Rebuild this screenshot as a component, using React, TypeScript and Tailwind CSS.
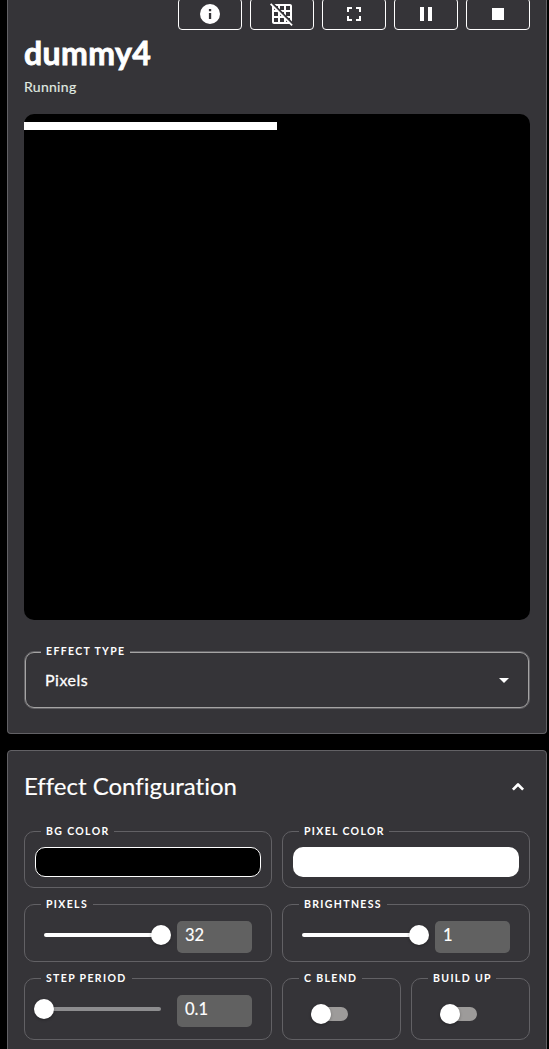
import type { ReactNode } from "react";
import { MdArrowDropDown, MdFullscreen, MdGridOff, MdPause, MdStop } from "react-icons/md";

function InfoIcon() {
  return (
    <svg viewBox="0 0 24 24" className="size-6" fill="currentColor" fillRule="evenodd">
      <path d="M12 2a10 10 0 1 0 0 20 10 10 0 0 0 0-20zM10.9 7h2.3v2.2h-2.3zM10.9 11h2.3v6h-2.3z" />
    </svg>
  );
}

function ChevronUp() {
  return (
    <svg viewBox="0 0 24 24" className="size-6" fill="none" stroke="currentColor" strokeWidth="2.7" strokeLinejoin="round">
      <path d="M6.9 14.6 12 9.5l5.1 5.1" />
    </svg>
  );
}

function ToolButton({ children }: { children: ReactNode }) {
  return (
    <button className="flex h-8 w-16 items-center justify-center rounded border border-white text-2xl text-white">
      {children}
    </button>
  );
}

function Label({ text, width }: { text: string; width: string }) {
  return (
    <div className="absolute -top-[6px] left-4 flex h-3 bg-[#353438] pl-[5px]">
      <span className={`block whitespace-nowrap text-[10.5px] leading-[11px] font-bold tracking-[1.35px] text-white ${width}`}>{text}</span>
    </div>
  );
}

function Field({ label, labelWidth, className, children }: { label: string; labelWidth: string; className: string; children: ReactNode }) {
  return (
    <div className={`relative rounded-[10px] border border-[#626165] ${className}`}>
      <Label text={label} width={labelWidth} />
      {children}
    </div>
  );
}

function Slider({ full }: { full: boolean }) {
  return (
    <div className="relative flex h-5 w-[117px] items-center">
      <div className={`h-1 w-full rounded-full ${full ? "bg-white" : "bg-[#8d8d8f]"}`} />
      <div className={`absolute top-0 size-5 rounded-full bg-white shadow-[0_1px_3px_rgba(0,0,0,0.3)] ${full ? "-right-[10px]" : "-left-[10px]"}`} />
    </div>
  );
}

function NumberBox({ value }: { value: string }) {
  return (
    <div className="ml-4 flex h-8 w-[75px] items-center rounded-[5px] bg-[#616161] pb-[3px] pl-2 text-[16.5px] text-white [-webkit-text-stroke:0.15px_white]">
      {value}
    </div>
  );
}

function Toggle() {
  return (
    <div className="relative ml-[31px] mt-[28px] h-[14px] w-[34px] rounded-full bg-[#9d9b9a]">
      <div className="absolute -left-[3px] -top-[3px] size-5 rounded-full bg-white shadow-[0_1px_3px_rgba(0,0,0,0.3)]" />
    </div>
  );
}

export default function App() {
  return (
    <div className="h-[1049px] w-[549px] overflow-hidden bg-black pl-[7px] font-[Lato,'Noto_Sans',sans-serif] text-white [font-variant-ligatures:none]">
      <section className="flex h-[734px] w-[540px] flex-col rounded-b-[4px] border border-t-0 border-[#626165] bg-[#353438] px-4">
        <div className="-mt-[2px] flex justify-end gap-2">
          <ToolButton><InfoIcon /></ToolButton>
          <ToolButton><MdGridOff /></ToolButton>
          <ToolButton><MdFullscreen /></ToolButton>
          <ToolButton><MdPause /></ToolButton>
          <ToolButton><MdStop /></ToolButton>
        </div>
        <h1 className="mt-[3px] h-10 text-[32px] leading-10 font-bold tracking-[0.4px] [-webkit-text-stroke:0.8px_white]">dummy4</h1>
        <p className="mt-1 h-5 text-[14px] leading-5 tracking-[0.3px] text-[#e0ebe2] [-webkit-text-stroke:0.15px_#e0ebe2]">Running</p>
        <div className="mt-[17px] h-[506px] w-[506px] rounded-[10px] bg-black pt-2">
          <div className="h-2 w-[253px] bg-white" />
        </div>
        <div className="relative mt-[31px] h-[58px] rounded-[10px] border border-[#626165]">
          <div className="flex h-full items-center justify-between rounded-[9px] border border-[#a5a4a4] pl-[19px] pr-[12px]">
            <span className="text-[16px] tracking-[0.5px] [-webkit-text-stroke:0.3px_white]">Pixels</span>
            <MdArrowDropDown className="text-2xl" />
          </div>
          <Label text="EFFECT TYPE" width="w-[84px]" />
        </div>
      </section>

      <section className="mt-4 h-[320px] w-[540px] rounded-t-[4px] border border-[#626165] bg-[#353438] px-4">
        <header className="flex h-[72px] items-center justify-between">
          <h2 className="pb-[2px] text-[24px] [-webkit-text-stroke:0.15px_white]">Effect Configuration</h2>
          <ChevronUp />
        </header>
        <div className="mt-2 grid grid-cols-[248px_248px] gap-x-[10px]">
          <Field label="BG COLOR" labelWidth="w-[68px]" className="h-[57px] px-[10px] pt-[15px]">
            <div className="h-[30px] rounded-[10px] border border-white bg-black" />
          </Field>
          <Field label="PIXEL COLOR" labelWidth="w-[85px]" className="h-[57px] px-[10px] pt-[15px]">
            <div className="h-[30px] rounded-[10px] bg-white" />
          </Field>
          <Field label="PIXELS" labelWidth="w-[47px]" className="mt-4 flex h-[58px] items-start pl-[19px] pt-4">
            <div className="pt-1"><Slider full /></div>
            <NumberBox value="32" />
          </Field>
          <Field label="BRIGHTNESS" labelWidth="w-[83px]" className="mt-4 flex h-[58px] items-start pl-[19px] pt-4">
            <div className="pt-1"><Slider full /></div>
            <NumberBox value="1" />
          </Field>
          <Field label="STEP PERIOD" labelWidth="w-[86px]" className="mt-4 flex h-[62px] items-start pl-[19px] pt-4">
            <div className="pt-1"><Slider full={false} /></div>
            <NumberBox value="0.1" />
          </Field>
          <div className="mt-4 grid grid-cols-[119px_119px] gap-[10px]">
            <Field label="C BLEND" labelWidth="w-[58px]" className="h-[62px]">
              <Toggle />
            </Field>
            <Field label="BUILD UP" labelWidth="w-[63px]" className="h-[62px]">
              <Toggle />
            </Field>
          </div>
        </div>
      </section>
    </div>
  );
}
